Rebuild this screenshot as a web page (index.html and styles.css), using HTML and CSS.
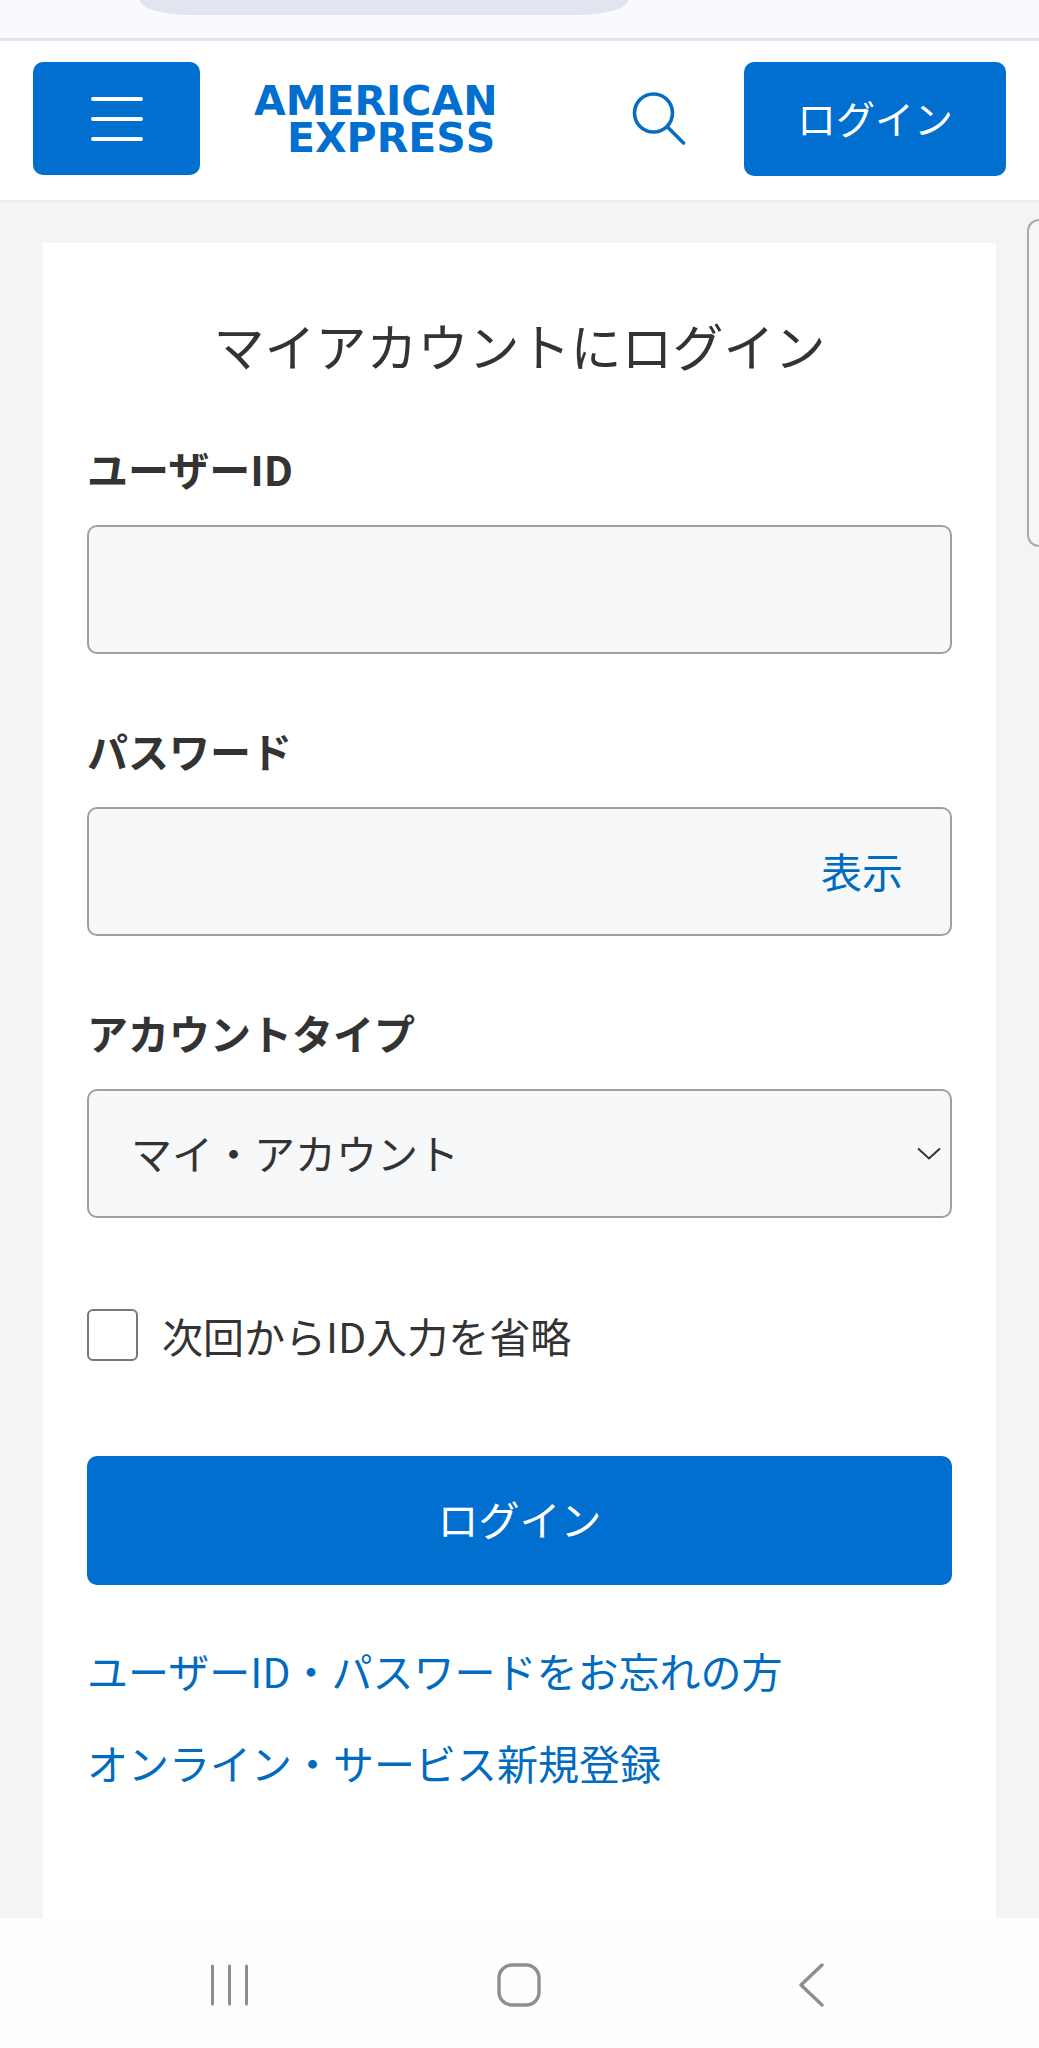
FILE: index.html
```html
<!DOCTYPE html>
<html lang="ja">
<head>
<meta charset="utf-8">
<meta name="viewport" content="width=device-width, initial-scale=1">
<title>マイアカウントにログイン</title>
<link rel="stylesheet" href="styles.css">
</head>
<body>
<div class="browser-bar"><div class="address-pill"></div></div>

<header class="site-header">
  <button class="menu-button" type="button" aria-label="メニュー">
    <svg width="54" height="46" viewBox="0 0 54 46" fill="none" stroke="#fff" stroke-width="4" stroke-linecap="round" aria-hidden="true">
      <path d="M3 3H51M3 23H51M3 43H51"/>
    </svg>
  </button>
  <a class="logo" href="#"><span>AMERICAN</span><span class="logo-second">EXPRESS</span></a>
  <button class="search-button" type="button" aria-label="検索">
    <svg width="54" height="54" viewBox="0 0 54 54" fill="none" stroke="#0a6cc0" stroke-width="3.6" stroke-linecap="round" aria-hidden="true">
      <circle cx="21.500" cy="21" r="19"/>
      <path d="M35.500 35L51.500 51"/>
    </svg>
  </button>
  <button class="header-login" type="button">ログイン</button>
</header>

<main class="page">
  <form class="card">
    <h1 class="title">マイアカウントにログイン</h1>

    <div class="field">
      <label for="user-id">ユーザーID</label>
      <input class="control" id="user-id" type="text">
    </div>

    <div class="field">
      <label for="password">パスワード</label>
      <div class="control control-group">
        <input class="bare-input" id="password" type="password">
        <button class="show-button" type="button">表示</button>
      </div>
    </div>

    <div class="field">
      <label for="account-type">アカウントタイプ</label>
      <div class="select-wrap">
        <select class="control" id="account-type">
          <option>マイ・アカウント</option>
        </select>
        <svg class="chevron" width="24" height="14" viewBox="0 0 24 14" fill="none" stroke="#333" stroke-width="2" aria-hidden="true">
          <path d="M1 1.500L12 11.500L23 1.500"/>
        </svg>
      </div>
    </div>

    <div class="remember">
      <input class="checkbox" id="remember" type="checkbox">
      <label for="remember">次回からID入力を省略</label>
    </div>

    <button class="submit" type="submit">ログイン</button>

    <nav class="links">
      <a href="#">ユーザーID・パスワードをお忘れの方</a>
      <a href="#">オンライン・サービス新規登録</a>
    </nav>
  </form>
  <div class="edge-handle"></div>
</main>

<footer class="system-nav">
  <button type="button" aria-label="履歴">
    <svg width="44" height="44" viewBox="0 0 44 44" fill="none" stroke="#8e8e8e" stroke-width="3" stroke-linecap="round" aria-hidden="true">
      <path d="M5.500 3V41M22.500 3V41M39.500 3V41"/>
    </svg>
  </button>
  <button type="button" aria-label="ホーム">
    <svg width="44" height="44" viewBox="0 0 44 44" fill="none" stroke="#8e8e8e" stroke-width="3.400" aria-hidden="true">
      <rect x="2" y="2" width="40" height="40" rx="13"/>
    </svg>
  </button>
  <button type="button" aria-label="戻る">
    <svg width="44" height="44" viewBox="0 0 44 44" fill="none" stroke="#8e8e8e" stroke-width="3.400" stroke-linecap="round" stroke-linejoin="round" aria-hidden="true">
      <path d="M34 2L13 22L34 42"/>
    </svg>
  </button>
</footer>
</body>
</html>
```
FILE: styles.css
```css
:root {
  --blue: #006fcf;
  --text: #333;
  --border: #a0a0a0;
}

* { box-sizing: border-box; }

body {
  display: flex;
  flex-direction: column;
  min-height: 100vh;
  margin: 0;
  background: #fff;
  color: var(--text);
  font-family: "Noto Sans CJK JP", sans-serif;
  font-size: 41px;
  line-height: 56px;
}

button, input, select {
  margin: 0;
  padding: 0;
  border: 0;
  background: none;
  color: inherit;
  font: inherit;
}

button { cursor: pointer; }
svg { display: block; }
a { color: #006bbf; text-decoration: none; }

.browser-bar {
  height: 41px;
  border-bottom: 3px solid #e3e3ef;
  background: #f9f9fe;
}

.address-pill {
  width: 47%;
  height: 15px;
  margin-left: 140px;
  border-radius: 0 0 48px 48px / 0 0 15px 15px;
  background: #e2e5ef;
}

.site-header {
  display: flex;
  align-items: center;
  height: 161px;
  padding: 0 33px 4px;
  border-bottom: 2px solid #ececec;
}

.menu-button {
  display: grid;
  place-items: center;
  width: 167px;
  height: 113px;
  border-radius: 10px;
  background: var(--blue);
}

.logo {
  display: flex;
  flex-direction: column;
  margin-left: 54px;
  padding-top: 2px;
  color: var(--blue);
  font: bold 41px/37px "DejaVu Sans", sans-serif;
  font-kerning: none;
}

.logo-second { margin-left: 33px; }

.search-button {
  margin-left: auto;
  margin-right: 58px;
}

.header-login {
  width: 262px;
  height: 114px;
  padding-bottom: 4px;
  border-radius: 10px;
  background: var(--blue);
  color: #fff;
  font-size: 39px;
}

.page {
  position: relative;
  display: flex;
  flex: 1;
  padding: 41px 43px 0;
  background: #f4f4f4;
}

.card {
  flex: 1;
  min-width: 0;
  padding: 66px 44px 120px;
  background: #fff;
}

.title {
  margin: 0 0 59px;
  font-size: 51px;
  font-weight: 400;
  line-height: 72px;
  text-align: center;
}

.field { margin-bottom: 68px; }

.field label {
  display: block;
  margin-bottom: 29px;
  font-weight: 700;
}

.control {
  display: block;
  width: 100%;
  height: 129px;
  padding: 0 42px 4px;
  border: 2px solid var(--border);
  border-radius: 10px;
  background: #f7f8fa;
}

.control-group {
  display: flex;
  align-items: center;
  padding-right: 47px;
}

.bare-input {
  flex: 1;
  min-width: 0;
  height: 100%;
}

.show-button { color: #006bbf; }

.select-wrap {
  display: grid;
  align-items: center;
}

.select-wrap > * { grid-area: 1 / 1; }
.select-wrap select { appearance: none; }

.chevron {
  justify-self: end;
  margin-right: 11px;
  pointer-events: none;
}

.remember {
  display: flex;
  align-items: center;
  gap: 24px;
  height: 52px;
  margin: 91px 0 95px;
}

.checkbox {
  width: 51px;
  height: 52px;
  border: 2px solid #777;
  border-radius: 6px;
  appearance: none;
}

.submit {
  display: block;
  width: 100%;
  height: 129px;
  padding-bottom: 6px;
  border-radius: 10px;
  background: var(--blue);
  color: #fff;
}

.links {
  display: flex;
  flex-direction: column;
  align-items: flex-start;
  gap: 36px;
  margin-top: 57px;
}

.edge-handle {
  position: absolute;
  top: 17px;
  right: 0;
  width: 12px;
  height: 328px;
  border: 2px solid #aaa;
  border-right: 0;
  border-radius: 12px 0 0 12px;
  background: #f6f6f6;
}

.system-nav {
  display: grid;
  grid-template-columns: repeat(3, 1fr);
  place-items: center;
  height: 130px;
  padding: 4px 8% 0;
  background: #fdfdfd;
}
```
